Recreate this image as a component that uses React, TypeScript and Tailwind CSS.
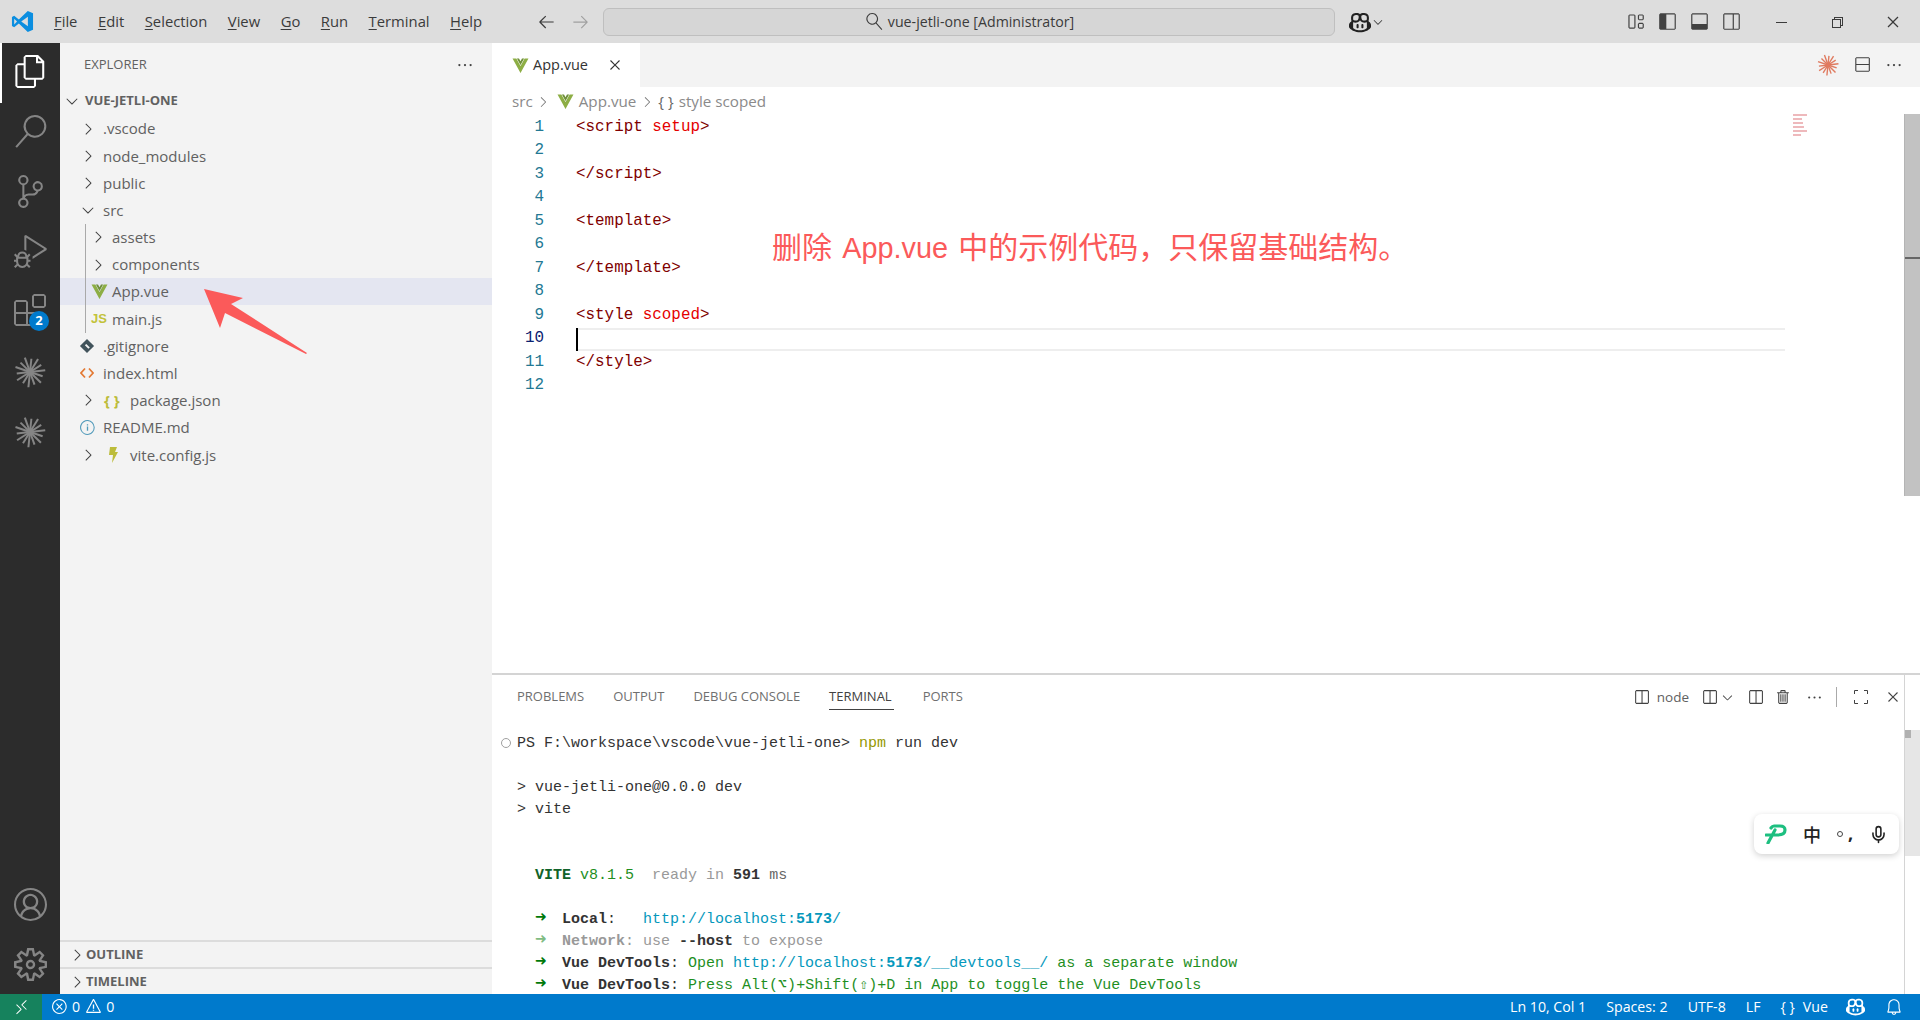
import { useMemo } from "react"
import {
  VscArrowLeft,
  VscArrowRight,
  VscAccount,
  VscBell,
  VscChevronDown,
  VscChevronRight,
  VscChromeClose,
  VscChromeMinimize,
  VscChromeRestore,
  VscClose,
  VscCopilot,
  VscDebugAlt,
  VscEllipsis,
  VscError,
  VscExtensions,
  VscFiles,
  VscInfo,
  VscLayout,
  VscLayoutPanel,
  VscLayoutSidebarLeft,
  VscLayoutSidebarRightOff,
  VscRemote,
  VscSearch,
  VscSettingsGear,
  VscSourceControl,
  VscSplitHorizontal,
  VscSplitVertical,
  VscTrash,
  VscWarning,
} from "react-icons/vsc"
import { Mic } from "lucide-react"

const UI = "font-['Open_Sans','Noto_Sans_CJK_SC',sans-serif]"
const MONO = "font-['Liberation_Mono','DejaVu_Sans_Mono',monospace]"

function VueIcon({ size = 16 }: { size?: number }) {
  return (
    <svg width={size} height={size} viewBox="0 0 16 16" className="shrink-0">
      <path d="M0.5 1.5h3.6L8 8.4l3.9-6.9h3.6L8 15z" fill="#8dae45" />
      <path d="M4.6 1.5h2L8 4l1.4-2.5h2L8 7.6z" fill="#6f8f3a" />
    </svg>
  )
}

function Burst({ size, color, rays = 14 }: { size: number; color: string; rays?: number }) {
  const lines = useMemo(() => Array.from({ length: rays }, (_, i) => (i * 360) / rays + 6), [rays])
  return (
    <svg width={size} height={size} viewBox="0 0 24 24">
      {lines.map((a, i) => (
        <line
          key={a}
          x1="12"
          y1="12"
          x2="12"
          y2={i % 2 ? 0.5 : 2}
          stroke={color}
          strokeWidth="1.5"
          transform={`rotate(${a} 12 12)`}
        />
      ))}
      <circle cx="12" cy="12" r="2.6" fill={color} />
    </svg>
  )
}

function ActivityIcon({ children, className = "" }: { children: React.ReactNode; className?: string }) {
  return <div className={`relative flex h-[60px] w-[60px] items-center justify-center ${className}`}>{children}</div>
}

function ActivityBar() {
  return (
    <div className="flex w-[60px] shrink-0 flex-col bg-[#2c2c2c] text-[#858585]">
      <ActivityIcon className="border-l-2 border-white pb-[3px] pr-[2px] text-white">
        <VscFiles size={33} />
      </ActivityIcon>
      <ActivityIcon className="pb-[3px]">
        <VscSearch size={33} />
      </ActivityIcon>
      <ActivityIcon className="pb-[3px]">
        <VscSourceControl size={33} />
      </ActivityIcon>
      <ActivityIcon className="pb-[3px]">
        <VscDebugAlt size={33} />
      </ActivityIcon>
      <ActivityIcon className="pb-[6px]">
        <VscExtensions size={32} />
        <span className="absolute left-[29px] top-[28px] flex h-[20px] w-[20px] items-center justify-center rounded-full bg-[#007acc] text-[13px] font-bold text-white">
          2
        </span>
      </ActivityIcon>
      <ActivityIcon className="pb-[3px]">
        <Burst size={32} color="#858585" />
      </ActivityIcon>
      <ActivityIcon className="pb-[3px]">
        <Burst size={32} color="#858585" />
      </ActivityIcon>
      <div className="flex-1" />
      <ActivityIcon>
        <VscAccount size={33} />
      </ActivityIcon>
      <ActivityIcon>
        <VscSettingsGear size={33} />
      </ActivityIcon>
    </div>
  )
}

function Mnemonic({ first, rest }: { first: string; rest: string }) {
  return (
    <span>
      <span className="underline underline-offset-2">{first}</span>
      {rest}
    </span>
  )
}

function TitleBar() {
  return (
    <div className="flex h-[43px] shrink-0 items-center bg-[#dddddd] text-[#3b3b3b]">
      <svg width="23" height="23" viewBox="0 0 24 24" className="ml-[11px] shrink-0">
        <path d="M17.5 1 8.2 9.8 3.3 6 1 7.2v9.6l2.3 1.2 4.9-3.8 9.300 8.800 5.500-2.300V3.300z" fill="#0b8ee0" />
        <path d="M17.6 7 10.700 12l6.900 5z" fill="#dddddd" />
        <path d="M3.300 9v6l3-3z" fill="#dddddd" />
      </svg>
      <div className="ml-[20px] flex w-[450px] gap-[20.5px] text-[14.8px]">
        <Mnemonic first="F" rest="ile" />
        <Mnemonic first="E" rest="dit" />
        <Mnemonic first="S" rest="election" />
        <Mnemonic first="V" rest="iew" />
        <Mnemonic first="G" rest="o" />
        <Mnemonic first="R" rest="un" />
        <Mnemonic first="T" rest="erminal" />
        <Mnemonic first="H" rest="elp" />
      </div>
      <div className="ml-[33px] flex w-[66px] items-center gap-[15px]">
        <VscArrowLeft size={19} />
        <VscArrowRight size={19} className="text-[#a0a0a0]" />
      </div>
      <div className="flex h-[28px] w-[732px] items-center justify-center gap-[5px] rounded-[6px] border border-[#bfbfbf] bg-[#d6d6d6] pl-[2px] text-[14.2px]">
        <VscSearch size={17} className="scale-x-[-1]" />
        vue-jetli-one [Administrator]
      </div>
      <div className="ml-[14px] flex items-center">
        <VscCopilot size={22} className="text-[#222222]" />
        <VscChevronDown size={14} />
      </div>
      <div className="ml-auto flex items-center">
        <div className="flex items-center gap-[13px] text-[#424242]">
          <VscLayout size={19} />
          <VscLayoutSidebarLeft size={19} />
          <VscLayoutPanel size={19} />
          <VscLayoutSidebarRightOff size={19} />
        </div>
        <div className="ml-[32px] flex items-center gap-[40px] pr-[19px]">
          <VscChromeMinimize size={16} />
          <VscChromeRestore size={16} />
          <VscChromeClose size={16} />
        </div>
      </div>
    </div>
  )
}

function TreeRow({
  label,
  indent,
  slot,
  chevron,
  icon,
  active,
  guide,
}: {
  label: string
  indent: number
  slot: number
  chevron?: "right" | "down"
  icon?: React.ReactNode
  active?: boolean
  guide?: boolean
}) {
  return (
    <div
      className={`relative flex h-[27.2px] items-center text-[15px] text-[#616161] ${active ? "bg-[#e4e6f1]" : ""}`}
      style={{ paddingLeft: indent }}
    >
      {guide && <div className="absolute bottom-0 left-[25px] top-0 w-px bg-[#a9a9a9]" />}
      <div className="flex shrink-0 items-center text-[#424242]" style={{ width: slot }}>
        {chevron === "right" && <VscChevronRight size={18} className="shrink-0" />}
        {chevron === "down" && <VscChevronDown size={18} className="shrink-0" />}
        {icon}
      </div>
      <span>{label}</span>
    </div>
  )
}

function Sidebar() {
  return (
    <div className={`flex w-[432px] shrink-0 flex-col bg-[#f3f3f3] ${UI}`}>
      <div className="flex h-[44px] shrink-0 items-center justify-between pl-[24px] pr-[18px] text-[13px] text-[#616161]">
        <span>EXPLORER</span>
        <VscEllipsis size={18} className="text-[#424242]" />
      </div>
      <div className="flex h-[28px] shrink-0 items-center pl-[3px] text-[13px] font-bold text-[#616161]">
        <div className="flex w-[18px] justify-center text-[#424242]">
          <VscChevronDown size={18} />
        </div>
        <span className="ml-[4px]">VUE-JETLI-ONE</span>
      </div>
      <div className="flex-1">
        <TreeRow label=".vscode" indent={19} slot={24} chevron="right" />
        <TreeRow label="node_modules" indent={19} slot={24} chevron="right" />
        <TreeRow label="public" indent={19} slot={24} chevron="right" />
        <TreeRow label="src" indent={19} slot={24} chevron="down" />
        <TreeRow label="assets" indent={29} slot={23} chevron="right" guide />
        <TreeRow label="components" indent={29} slot={23} chevron="right" guide />
        <TreeRow label="App.vue" indent={31} slot={21} icon={<VueIcon size={17} />} active guide />
        <TreeRow
          label="main.js"
          indent={31}
          slot={21}
          icon={<span className="font-['Liberation_Sans'] text-[13px] font-bold text-[#c2c23a]">JS</span>}
          guide
        />
        <TreeRow
          label=".gitignore"
          indent={20}
          slot={23}
          icon={
            <span className="ml-[2px] flex h-[10px] w-[10px] rotate-45 items-center justify-center bg-[#41535b]">
              <span className="h-[2px] w-[5px] bg-[#f3f3f3]" />
            </span>
          }
        />
        <TreeRow
          label="index.html"
          indent={20}
          slot={23}
          icon={
            <svg width="14" height="12" viewBox="0 0 14 12" fill="none" strokeWidth="1.700">
              <path d="M5 1.500 1 6l4 4.500" stroke="#e37933" />
              <path d="M9 1.500 13 6l-4 4.500" stroke="#e37933" />
            </svg>
          }
        />
        <TreeRow
          label="package.json"
          indent={19}
          slot={51}
          chevron="right"
          icon={<span className="ml-[7px] text-[15px] font-bold text-[#bcbc3a]">{"{ }"}</span>}
        />
        <TreeRow
          label="README.md"
          indent={19}
          slot={24}
          icon={<VscInfo size={17} className="text-[#519aba]" />}
        />
        <TreeRow
          label="vite.config.js"
          indent={19}
          slot={51}
          chevron="right"
          icon={
            <svg width="12" height="16" viewBox="0 0 12 16" className="ml-[10px] shrink-0">
              <path d="M3 0h7L8 5h3L5 16l1-8H2z" fill="#bcbc3a" />
            </svg>
          }
        />
      </div>
      <div className="flex h-[27px] shrink-0 items-center border-t-2 border-[#dcdcdc] pl-[8px] text-[13px] font-bold text-[#616161]">
        <VscChevronRight size={18} className="text-[#424242]" />
        <span>OUTLINE</span>
      </div>
      <div className="flex h-[27px] shrink-0 items-center border-t-2 border-[#dcdcdc] pl-[8px] text-[13px] font-bold text-[#616161]">
        <VscChevronRight size={18} className="text-[#424242]" />
        <span>TIMELINE</span>
      </div>
    </div>
  )
}

const tag = "text-[#800000]"
const attr = "text-[#e50000]"

const codeLines: React.ReactNode[] = [
  <>
    <span className={tag}>{"<script "}</span>
    <span className={attr}>setup</span>
    <span className={tag}>{">"}</span>
  </>,
  "",
  <span className={tag}>{"</script>"}</span>,
  "",
  <span className={tag}>{"<template>"}</span>,
  "",
  <span className={tag}>{"</template>"}</span>,
  "",
  <>
    <span className={tag}>{"<style "}</span>
    <span className={attr}>scoped</span>
    <span className={tag}>{">"}</span>
  </>,
  "",
  <span className={tag}>{"</style>"}</span>,
  "",
]

function Editor() {
  return (
    <div className="relative flex min-h-0 flex-1 flex-col bg-white">
      <div className={`flex h-[44px] shrink-0 items-center bg-[#f3f3f3] ${UI}`}>
        <div className="flex h-full w-[148px] items-center bg-white pl-[20px] text-[14.5px] text-[#333333]">
          <VueIcon size={17} />
          <span className="ml-[4px]">App.vue</span>
          <VscClose size={18} className="ml-[18px]" />
        </div>
        <div className="ml-auto flex items-center gap-[14px] pr-[17px] text-[#424242]">
          <Burst size={22} color="#e07a5f" />
          <VscSplitVertical size={18} />
          <VscEllipsis size={18} />
        </div>
      </div>
      <div className={`flex h-[29px] shrink-0 items-center pl-[20px] text-[15.2px] text-[#8a8a8a] ${UI}`}>
        src
        <VscChevronRight size={16} className="ml-[2px] mr-[6px] text-[#777777]" />
        <VueIcon size={17} />
        <span className="ml-[5px]">App.vue</span>
        <VscChevronRight size={16} className="ml-[3px] text-[#777777]" />
        <span className="ml-[3px] mr-[5px] text-[#666666]">{"{ }"}</span>
        style scoped
      </div>
      <div className={`relative flex-1 text-[15.9px] ${MONO}`}>
        {codeLines.map((line, i) => (
          <div key={i} className="relative flex h-[23.5px] items-center leading-none">
            {i === 9 && (
              <>
                <div className="absolute inset-y-0 left-[84px] w-[1209px] border-y-2 border-[#eeeeee]" />
                <div className="absolute inset-y-0 left-[84px] w-[2px] bg-black" />
              </>
            )}
            <span className={`w-[52px] text-right ${i === 9 ? "text-[#0b216f]" : "text-[#237893]"}`}>{i + 1}</span>
            <span className="ml-[32px] whitespace-pre">{line}</span>
          </div>
        ))}
      </div>
      {/* minimap */}
      <div className="absolute left-[1301px] top-[71px] flex flex-col gap-[2px]">
        {[14, 9, 10, 11, 14, 8].map((w, i) => (
          <div key={i} className="h-[2px] bg-[#eeb9bc]" style={{ width: w }} />
        ))}
      </div>
      {/* scrollbar */}
      <div className="absolute right-0 top-[71px] h-[382px] w-[16px] border-l border-[#b4b4b4] bg-[#c2c2c2]">
        <div className="mt-[143px] h-[2px] w-full bg-[#666666]" />
      </div>
    </div>
  )
}

function PanelTab({ label, active, className = "" }: { label: string; active?: boolean; className?: string }) {
  return (
    <div
      className={`flex h-[26px] items-center border-b ${className} ${
        active ? "border-[#424242] text-[#424242]" : "border-transparent text-[#6f6f6f]"
      }`}
    >
      {label}
    </div>
  )
}

function TermLine({ children }: { children?: React.ReactNode }) {
  return <div className="h-[22px] whitespace-pre leading-[22px]">{children}</div>
}

function Arrow({ dim }: { dim?: boolean }) {
  return (
    <span
      className={`inline-block w-[9px] text-[19px] font-bold leading-none ${dim ? "text-[#7fbc84]" : "text-[#00790a]"}`}
    >
      ➜
    </span>
  )
}

function Panel() {
  const green = "text-[#1f8f1f]"
  const cyan = "text-[#0598bc]"
  const dim = "text-[#999999]"
  return (
    <div className="relative flex h-[321px] shrink-0 flex-col border-t-2 border-[#d4d4d4] bg-white">
      <div className={`flex h-[44px] shrink-0 items-center pl-[25px] pr-[18px] text-[13px] ${UI}`}>
        <div className="flex gap-[29px]">
          <PanelTab label="PROBLEMS" />
          <PanelTab label="OUTPUT" />
          <PanelTab label="DEBUG CONSOLE" />
          <PanelTab label="TERMINAL" active className="pr-[2px]" />
          <PanelTab label="PORTS" />
        </div>
        <div className="ml-auto flex items-center text-[#424242]">
          <VscSplitHorizontal size={17} />
          <span className="ml-[7px] text-[13.5px] text-[#616161]">node</span>
          <VscSplitHorizontal size={17} className="ml-[12px]" />
          <VscChevronDown size={15} className="ml-[2px]" />
          <VscSplitHorizontal size={17} className="ml-[12px]" />
          <VscTrash size={17} className="ml-[11px]" />
          <VscEllipsis size={17} className="ml-[14px]" />
          <div className="ml-[13px] h-[20px] w-px bg-[#aaaaaa]" />
          <svg width="16" height="16" viewBox="0 0 16 16" fill="none" stroke="currentColor" className="ml-[16px]">
            <path d="M1.500 5V1.500H5M11 1.500h3.500V5M14.500 11v3.500H11M5 14.500H1.500V11" />
          </svg>
          <VscClose size={18} className="ml-[15px]" />
        </div>
      </div>
      <div className={`relative flex-1 pl-[25px] pt-[14px] text-[15px] text-[#333333] ${MONO}`}>
        <div className="absolute left-[9px] top-[19px] h-[10px] w-[10px] rounded-full border-[1.5px] border-[#a0a0a0]" />
        <TermLine>
          {"PS F:\\workspace\\vscode\\vue-jetli-one> "}
          <span className="text-[#949800]">npm</span> run dev
        </TermLine>
        <TermLine />
        <TermLine>{"> vue-jetli-one@0.0.0 dev"}</TermLine>
        <TermLine>{"> vite"}</TermLine>
        <TermLine />
        <TermLine />
        <TermLine>
          {"  "}
          <span className="font-bold text-[#116329]">VITE</span> <span className={green}>v8.1.5</span>
          {"  "}
          <span className={dim}>ready in </span>
          <span className="font-bold">591</span> <span className="text-[#666666]">ms</span>
        </TermLine>
        <TermLine />
        <TermLine>
          {"  "}
          <Arrow />
          {"  "}
          <span className="font-bold">Local</span>
          {":   "}
          <span className={cyan}>
            http://localhost:<span className="font-bold">5173</span>/
          </span>
        </TermLine>
        <TermLine>
          {"  "}
          <Arrow dim />
          {"  "}
          <span className={`font-bold ${dim}`}>Network</span>
          <span className={dim}>: use </span>
          <span className="font-bold">--host</span>
          <span className={dim}> to expose</span>
        </TermLine>
        <TermLine>
          {"  "}
          <Arrow />
          {"  "}
          <span className="font-bold">Vue DevTools</span>
          {": "}
          <span className={green}>Open </span>
          <span className={cyan}>
            http://localhost:<span className="font-bold">5173</span>/__devtools__/
          </span>
          <span className={green}> as a separate window</span>
        </TermLine>
        <TermLine>
          {"  "}
          <Arrow />
          {"  "}
          <span className="font-bold">Vue DevTools</span>
          {": "}
          <span className={green}>Press Alt(⌥)+Shift(⇧)+D in App to toggle the Vue DevTools</span>
        </TermLine>
      </div>
      {/* terminal scrollbar */}
      <div className="absolute bottom-0 right-[15px] top-0 w-px bg-[#d4d4d4]" />
      <div className="absolute right-0 top-[55px] h-[126px] w-[15px] bg-[#e6e6e6]">
        <div className="h-[8px] w-[6px] bg-[#b0b0b0]" />
      </div>
    </div>
  )
}

function StatusBar() {
  return (
    <div className={`flex h-[26px] shrink-0 items-center bg-[#007acc] text-[14.2px] text-white ${UI}`}>
      <div className="flex h-full w-[42px] items-center justify-center bg-[#16825d]">
        <VscRemote size={17} />
      </div>
      <div className="ml-[9px] flex items-center gap-[4px]">
        <VscError size={17} />
        <span>0</span>
        <VscWarning size={17} className="ml-[1px]" />
        <span>0</span>
      </div>
      <div className="ml-auto flex items-center gap-[20px] pr-[17px]">
        <span>Ln 10, Col 1</span>
        <span>Spaces: 2</span>
        <span>UTF-8</span>
        <span>LF</span>
        <span className="flex items-center gap-[8px]">
          <span>{"{ }"}</span>
          Vue
        </span>
        <VscCopilot size={19} className="-ml-[2px]" />
        <VscBell size={18} />
      </div>
    </div>
  )
}

function ImeBar() {
  return (
    <div className="absolute left-[1754px] top-[814px] flex h-[40px] w-[145px] items-center justify-between rounded-[8px] bg-white px-[11px] shadow-[0_2px_6px_rgba(0,0,0,0.18)]">
      <svg width="22" height="20" viewBox="0 0 22 20">
        <path
          d="M3 19 10 6M1 11h11c5 0 8-2 8-5s-2-4-5-4H9C8 2 7 2.500 6 4"
          fill="none"
          stroke="#1dbf80"
          strokeWidth="3.200"
          strokeLinecap="round"
        />
      </svg>
      <span className="font-['Noto_Sans_CJK_SC',sans-serif] text-[18px] font-medium text-[#222222]">中</span>
      <span className={`flex items-center gap-[5px] text-[18px] font-bold leading-none text-[#222222] ${UI}`}>
        <span className="h-[6px] w-[6px] rounded-full border border-[#444444]" />
        <span className="-mt-[3px]">,</span>
      </span>
      <Mic size={19} className="text-[#222222]" />
    </div>
  )
}

export default function App() {
  return (
    <div className={`relative flex h-[1020px] w-[1920px] flex-col overflow-hidden ${UI}`}>
      <TitleBar />
      <div className="flex min-h-0 flex-1">
        <ActivityBar />
        <Sidebar />
        <div className="flex min-w-0 flex-1 flex-col">
          <Editor />
          <Panel />
        </div>
      </div>
      <StatusBar />
      <ImeBar />
      {/* annotation added on top of the screenshot */}
      <div className="absolute left-[772px] top-[228px] whitespace-nowrap font-['Liberation_Sans','Noto_Sans_CJK_SC',sans-serif] text-[30px] leading-[40px] text-[#fb5a5a] [word-spacing:2px]">
        删除 <span className="text-[28.8px]">App.vue</span> 中的示例代码，只保留基础结构。
      </div>
      <svg width="120" height="80" viewBox="0 0 120 80" className="absolute left-[195px] top-[281px]">
        <path d="M9 8 48 17 36 23 112 72 111 73 30 32 25 47z" fill="#fb5a5a" />
      </svg>
    </div>
  )
}
